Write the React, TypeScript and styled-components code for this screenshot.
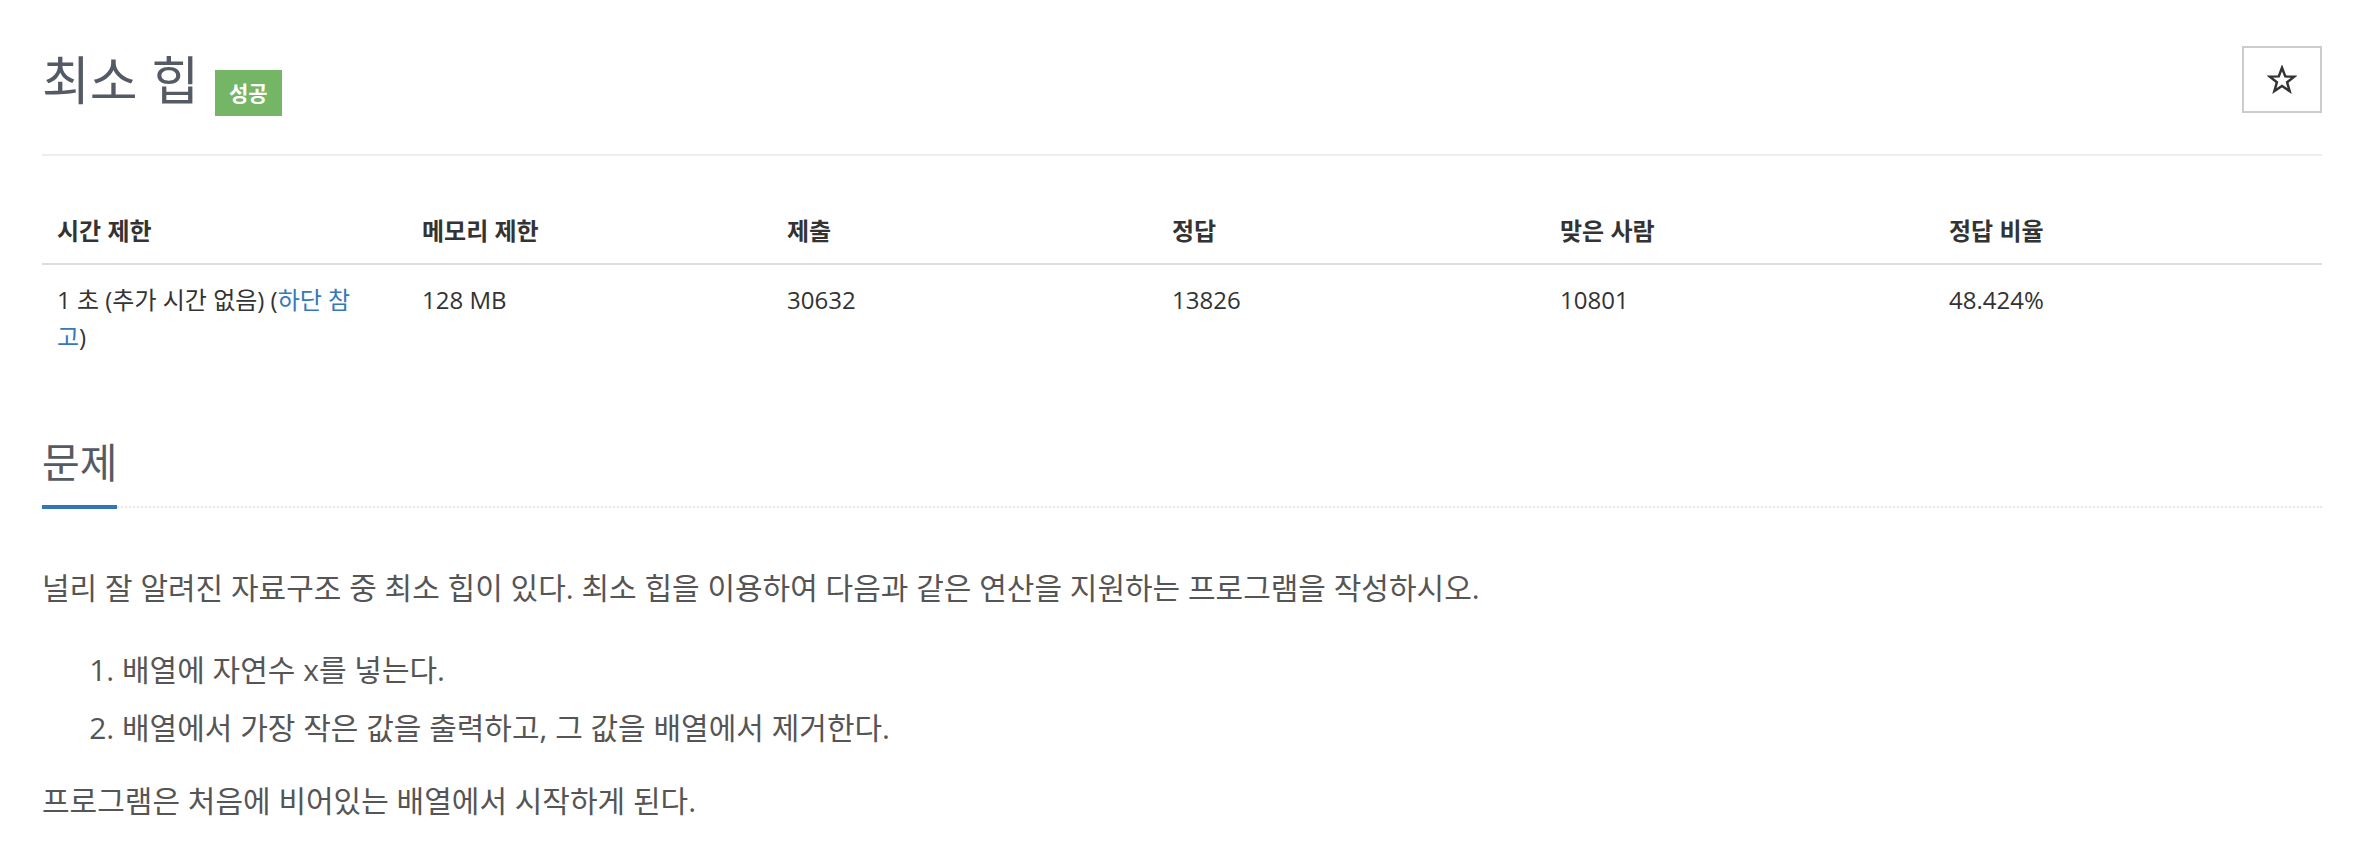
import React from "react";
import styled, { createGlobalStyle } from "styled-components";

interface Stat {
  label: string;
  width: number;
}

const columns: Stat[] = [
  { label: "시간 제한", width: 365 },
  { label: "메모리 제한", width: 365 },
  { label: "제출", width: 385 },
  { label: "정답", width: 388 },
  { label: "맞은 사람", width: 389 },
  { label: "정답 비율", width: 388 },
];

const values = ["128 MB", "30632", "13826", "10801", "48.424%"];

const App = () => {
  return (
    <>
      <GlobalStyle />
      <Page>
        <HeaderRow>
          <TitleGroup>
            <Title>최소 힙</Title>
            <Badge>성공</Badge>
          </TitleGroup>
          <StarButton type="button" aria-label="즐겨찾기">
            <svg width="30" height="30" viewBox="0 0 24 24">
              <polygon
                points="12,2.2 14.6,9.1 21.8,9.3 16.1,13.8 18.1,20.9 12,16.8 5.9,20.9 7.9,13.8 2.2,9.3 9.4,9.1"
                fill="none"
                stroke="#333"
                strokeWidth="2"
                strokeLinejoin="miter"
              />
            </svg>
          </StarButton>
        </HeaderRow>

        <InfoTable>
          <colgroup>
            {columns.map((c) => (
              <Col key={c.label} $w={c.width} />
            ))}
          </colgroup>
          <thead>
            <tr>
              {columns.map((c) => (
                <Th key={c.label}>{c.label}</Th>
              ))}
            </tr>
          </thead>
          <tbody>
            <tr>
              <Td>
                1 초 (추가 시간 없음) (<Link href="#">하단 참고</Link>)
              </Td>
              {values.map((v) => (
                <Td key={v}>{v}</Td>
              ))}
            </tr>
          </tbody>
        </InfoTable>

        <Headline>
          <SectionTitle>문제</SectionTitle>
        </Headline>

        <ProblemText>
          <Para $after={37}>
            널리 잘 알려진 자료구조 중 최소 힙이 있다. 최소 힙을 이용하여 다음과 같은 연산을 지원하는 프로그램을 작성하시오.
          </Para>
          <Steps>
            <Step>배열에 자연수 x를 넣는다.</Step>
            <Step>배열에서 가장 작은 값을 출력하고, 그 값을 배열에서 제거한다.</Step>
          </Steps>
          <Para $after={0}>프로그램은 처음에 비어있는 배열에서 시작하게 된다.</Para>
        </ProblemText>
      </Page>
    </>
  );
};

const GlobalStyle = createGlobalStyle`
  body {
    margin: 0;
    background: #fff;
    font-family: "Open Sans", "Noto Sans CJK KR", sans-serif;
  }
`;

const Page = styled.div`
  width: 2280px;
  padding: 0 46px 0 42px;
`;

const HeaderRow = styled.div`
  display: flex;
  justify-content: space-between;
  align-items: flex-start;
  padding: 46px 0 38px;
  border-bottom: 2px solid #eee;
`;

const TitleGroup = styled.div`
  display: flex;
  align-items: flex-start;
  margin-top: 8px;
`;

const Title = styled.h1`
  margin: 0;
  font-size: 52px;
  line-height: 52px;
  font-weight: 400;
  color: #555b65;
`;

const Badge = styled.span`
  display: inline-flex;
  align-items: center;
  height: 46px;
  margin: 16px 0 0 16px;
  padding: 0 14px;
  background: #74b566;
  color: #fff;
  font-size: 21px;
  font-weight: 700;
  line-height: 1;
`;

const StarButton = styled.button`
  display: flex;
  align-items: center;
  justify-content: center;
  box-sizing: border-box;
  width: 80px;
  height: 67px;
  padding: 0;
  background: #fff;
  border: 2px solid #ccc;
`;

const InfoTable = styled.table`
  width: 2280px;
  margin-top: 44px;
  border-collapse: collapse;
  table-layout: fixed;
  font-size: 24px;
  line-height: 37px;
  color: #333;
`;

const Col = styled.col<{ $w: number }>`
  width: ${(p) => p.$w}px;
`;

const Th = styled.th`
  text-align: left;
  font-weight: 700;
  padding: 12px 15px 14px;
  border-bottom: 2px solid #ddd;
`;

const Td = styled.td`
  vertical-align: top;
  padding: 16px 15px 12px;

  &:first-child {
    padding-right: 45px;
  }
`;

const Link = styled.a`
  color: #337ab7;
  text-decoration: none;
`;

const Headline = styled.div`
  display: flex;
  margin: 75px 0 57px;
  border-bottom: 2px dotted #e4e9f0;
`;

const SectionTitle = styled.h2`
  margin: 0 0 -3px;
  padding-bottom: 22px;
  font-size: 41px;
  line-height: 41px;
  font-weight: 400;
  color: #555b65;
  border-bottom: 4px solid #3276b9;
`;

const ProblemText = styled.div`
  font-size: 30px;
  line-height: 45px;
  color: #555;
`;

const Para = styled.p<{ $after: number }>`
  margin: 0 0 ${(p) => p.$after}px;
`;

const Steps = styled.ol`
  margin: 0 0 28px;
  padding-left: 80px;
`;

const Step = styled.li`
  & + & {
    margin-top: 13px;
  }
`;

export default App;
